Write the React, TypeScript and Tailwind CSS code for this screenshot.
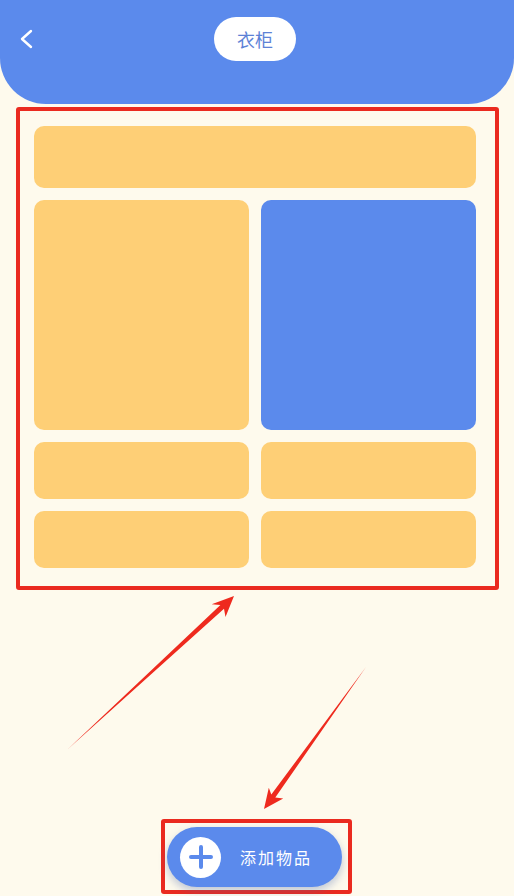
const font = { fontFamily: '"Noto Sans CJK SC", "Noto Sans", sans-serif' }

function Arrows() {
  // hand-drawn annotation arrows
  return (
    <svg className="pointer-events-none absolute inset-0" width="514" height="896" viewBox="0 0 514 896">
      <polygon
        fill="#ee2a1e"
        points="68,749 224,608.7 225.5,617 234,596 211.7,604.2 220.4,604.9"
      />
      <polygon
        fill="#ee2a1e"
        points="366,667 275.3,797.5 283.2,798.5 264,809 268.8,787.7 271.3,794.5"
      />
    </svg>
  )
}

export default function App() {
  return (
    <div className="relative flex min-h-screen flex-col bg-[#fefaed]" style={font}>
      {/* Header */}
      <header className="relative flex h-[104px] justify-center rounded-b-[46px] bg-[#5b8aec]">
        <button className="absolute left-[18px] top-[28px]">
          <svg width="18" height="22" viewBox="0 0 18 22">
            <path d="M13 3L4 11l9 8" fill="none" stroke="white" strokeWidth="2.4" strokeLinecap="round" strokeLinejoin="round" />
          </svg>
        </button>
        <div className="-ml-[4px] mt-[17px] flex h-[44px] w-[82px] items-center justify-center rounded-full bg-white text-[18px] text-[#5d82d6]">
          衣柜
        </div>
      </header>

      {/* Wardrobe grid (highlighted) */}
      <div className="ml-[16px] mt-[3px] w-[483px] rounded-[3px] border-[4px] border-[#ea2a1f] pb-[18px] pl-[14px] pr-[19px] pt-[15px]">
        <div className="flex flex-col gap-[12px]">
          <div className="h-[62px] rounded-[10px] bg-[#fecf76]" />
          <div className="grid grid-cols-2 gap-[12px]">
            <div className="h-[230px] rounded-[10px] bg-[#fecf76]" />
            <div className="h-[230px] rounded-[10px] bg-[#5b8aec]" />
            <div className="h-[57px] rounded-[10px] bg-[#fecf76]" />
            <div className="h-[57px] rounded-[10px] bg-[#fecf76]" />
            <div className="h-[57px] rounded-[10px] bg-[#fecf76]" />
            <div className="h-[57px] rounded-[10px] bg-[#fecf76]" />
          </div>
        </div>
      </div>

      {/* Add button (highlighted) */}
      <div className="mb-[2px] ml-[161px] mt-auto w-[191px] rounded-[3px] border-[4px] border-[#ea2a1f] pb-[3px] pl-[2px] pr-[6px] pt-[4px]">
        <button className="flex h-[60px] w-full items-center rounded-full bg-[#5b8aec] pl-[13px] shadow-[0_4px_8px_rgba(70,100,170,0.35)]">
          <span className="flex h-[41px] w-[41px] items-center justify-center rounded-full bg-white">
            <svg width="24" height="24" viewBox="0 0 24 24">
              <path d="M12 2v20M2 12h20" stroke="#5b8aec" strokeWidth="4" strokeLinecap="round" />
            </svg>
          </span>
          <span className="ml-[19px] text-[16px] tracking-[2px] text-white">添加物品</span>
        </button>
      </div>

      <Arrows />
    </div>
  )
}
